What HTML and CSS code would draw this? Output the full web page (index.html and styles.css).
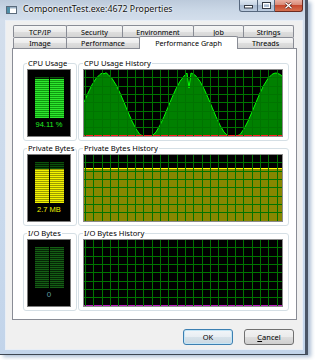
FILE: index.html
```html
<!DOCTYPE html>
<html>
<head>
<meta charset="utf-8">
<link rel="stylesheet" href="styles.css">
</head>
<body>
<div class="window">
  <div class="titlebar">
    <svg class="appicon" width="11" height="8" viewBox="0 0 11 8">
      <rect x="0.5" y="0.5" width="10" height="7" fill="#ffffff" stroke="#5b6b7c"/>
      <rect x="1" y="1" width="3" height="6" fill="#4f8fa8"/>
      <rect x="4" y="1" width="6" height="1.5" fill="#9fb3c6"/>
    </svg>
    <span class="title">ComponentTest.exe:4672 Properties</span>
    <div class="caption-buttons">
      <div class="cbtn min"><svg width="9" height="4" viewBox="0 0 9 4"><rect x="0.5" y="0.5" width="8" height="2.5" fill="#ffffff" stroke="#333a44"/></svg></div>
      <div class="cbtn max"><svg width="9" height="7" viewBox="0 0 9 7"><rect x="1" y="1" width="7" height="5" fill="none" stroke="#333a44" stroke-width="2"/><rect x="1.5" y="1.5" width="6" height="4" fill="none" stroke="#ffffff" stroke-width="1"/></svg></div>
      <div class="cbtn close"><svg width="9" height="7" viewBox="0 0 9 7"><path d="M1.5 0.8 L7.5 6.2 M7.5 0.8 L1.5 6.2" stroke="#5a1a10" stroke-width="2.6"/><path d="M1.5 0.8 L7.5 6.2 M7.5 0.8 L1.5 6.2" stroke="#ffffff" stroke-width="1.3"/></svg></div>
    </div>
  </div>
  <div class="client">
    <div class="tabs">
      <div class="tabrow row1">
        <div class="tab">TCP/IP</div>
        <div class="tab">Security</div>
        <div class="tab">Environment</div>
        <div class="tab">Job</div>
        <div class="tab">Strings</div>
      </div>
      <div class="tabrow row2">
        <div class="tab">Image</div>
        <div class="tab">Performance</div>
        <div class="tab selected">Performance Graph</div>
        <div class="tab">Threads</div>
      </div>
    </div>
    <div class="panel">
      <div class="grouprow">
        <fieldset class="group meter-group">
          <legend>CPU Usage</legend>
          <div class="meter">
            <div class="bars">
              <div class="col green"><div class="lit" style="height:94.11%"></div></div>
              <div class="col green"><div class="lit" style="height:94.11%"></div></div>
            </div>
            <div class="mval cpu">94.11 %</div>
          </div>
        </fieldset>
        <fieldset class="group hist-group">
          <legend>CPU Usage History</legend>
          <div class="graph">
            <svg width="198" height="66" viewBox="0 0 198 66">
              <path fill="#008000" d="M0,66 L0,32.4 4,23.1 8,14.9 12,8.5 16,4.4 18,3.2 20,3.8 22,2.8 24,4.4 28,8.5 32,14.9 36,23.1 40,32.4 44,42 48,51.1 52,58.9 56,64.7 60,66 64,66 68,66 72,62.1 76,55.2 80,46.7 84,37.2 88,27.7 92,18.8 96,11.4 100,6.1 103,3 105,18 107,3 110,4.5 112,6.1 116,11.4 120,18.8 124,27.7 128,37.2 132,46.7 136,55.2 140,62.1 144,66 148,66 152,66 156,64.7 160,58.9 164,51.1 168,42 172,32.4 176,23.1 180,14.9 184,8.5 188,4.4 190,3.4 192,3 194,3.6 196,4.4 198,6.1 L198,66 Z"/>
              <polyline fill="none" stroke="#00ff00" stroke-width="1" points="0,32.4 4,23.1 8,14.9 12,8.5 16,4.4 18,3.2 20,3.8 22,2.8 24,4.4 28,8.5 32,14.9 36,23.1 40,32.4 44,42 48,51.1 52,58.9 56,64.7 60,66 64,66 68,66 72,62.1 76,55.2 80,46.7 84,37.2 88,27.7 92,18.8 96,11.4 100,6.1 103,3 105,18 107,3 110,4.5 112,6.1 116,11.4 120,18.8 124,27.7 128,37.2 132,46.7 136,55.2 140,62.1 144,66 148,66 152,66 156,64.7 160,58.9 164,51.1 168,42 172,32.4 176,23.1 180,14.9 184,8.5 188,4.4 190,3.4 192,3 194,3.6 196,4.4 198,6.1"/>
              <line x1="0" y1="65.5" x2="198" y2="65.5" stroke="#ff2020" stroke-width="1"/>
            </svg>
          </div>
        </fieldset>
      </div>
      <div class="grouprow">
        <fieldset class="group meter-group">
          <legend>Private Bytes</legend>
          <div class="meter">
            <div class="bars">
              <div class="col green"><div class="lit yellow" style="height:82%"></div></div>
              <div class="col green"><div class="lit yellow" style="height:82%"></div></div>
            </div>
            <div class="mval mem">2.7 MB</div>
          </div>
        </fieldset>
        <fieldset class="group hist-group">
          <legend>Private Bytes History</legend>
          <div class="graph">
            <svg width="198" height="66" viewBox="0 0 198 66">
              <rect x="0" y="13" width="198" height="53" fill="#878700"/>
              <line x1="0" y1="13.5" x2="198" y2="13.5" stroke="#ffff00" stroke-width="1"/>
            </svg>
          </div>
        </fieldset>
      </div>
      <div class="grouprow">
        <fieldset class="group meter-group">
          <legend>I/O Bytes</legend>
          <div class="meter">
            <div class="bars">
              <div class="col green io"></div>
              <div class="col green io"></div>
            </div>
            <div class="mval io">0</div>
          </div>
        </fieldset>
        <fieldset class="group hist-group">
          <legend>I/O Bytes History</legend>
          <div class="graph">
            <svg width="198" height="66" viewBox="0 0 198 66">
              <line x1="0" y1="65.5" x2="198" y2="65.5" stroke="#c020c0" stroke-width="1"/>
            </svg>
          </div>
        </fieldset>
      </div>
    </div>
    <div class="buttons">
      <button class="btn default">OK</button>
      <button class="btn"><u>C</u>ancel</button>
    </div>
  </div>
</div>
</body>
</html>
```

FILE: styles.css
```css
html, body {
  margin: 0;
  padding: 0;
}
body {
  width: 315px;
  height: 360px;
  overflow: hidden;
  background: #ffffff;
  font-family: "Noto Sans", "Open Sans", sans-serif;
  color: #000;
}

.window {
  width: 308px;
  height: 355px;
  box-sizing: border-box;
  padding: 0 2px 5px 5px;
  display: flex;
  flex-direction: column;
  background: linear-gradient(180deg, #bccadb 0px, #cad7e6 10px, #d3deec 20px, #c9d9ec 60%, #c2d4ea 100%);
  border-right: 3px solid #4a5566;
  border-bottom: 1px solid #3d4652;
  box-shadow: 3px 2px 4px rgba(70, 110, 160, 0.45);
}

.titlebar {
  height: 20px;
  display: flex;
  align-items: flex-start;
  flex-shrink: 0;
}
.appicon {
  margin: 6px 0 0 1px;
  flex-shrink: 0;
}
.title {
  margin-left: 6px;
  font-size: 8.8px;
  line-height: 18px;
  white-space: nowrap;
  color: #111;
  text-shadow: 0 0 3px #ffffff, 0 0 2px #ffffff;
}
.caption-buttons {
  margin-left: auto;
  display: flex;
  height: 12px;
}
.cbtn {
  height: 12px;
  box-sizing: border-box;
  border: 1px solid #56677d;
  border-top: none;
  display: flex;
  align-items: center;
  justify-content: center;
  background: linear-gradient(180deg, #dfe8f2 0%, #c5d3e3 45%, #a9bbd1 50%, #bccce0 100%);
}
.cbtn.min {
  width: 19px;
  border-radius: 0 0 0 3px;
  align-items: flex-end;
  padding-bottom: 2px;
}
.cbtn.max {
  width: 17px;
  border-left: none;
}
.cbtn.close {
  width: 28px;
  border-left: none;
  border-color: #6d2c20;
  border-radius: 0 0 3px 0;
  background: linear-gradient(180deg, #eab0a2 0%, #d98a77 45%, #c6492f 50%, #d6704f 100%);
}

.client {
  flex: 1;
  box-sizing: border-box;
  background: #f0f0f0;
  border: 1px solid #e8eef6;
  padding: 4px 5px 4px 6px;
  display: flex;
  flex-direction: column;
}

.tabs {
  display: flex;
  flex-direction: column;
  padding-left: 1px;
}
.tabrow {
  display: grid;
}
.row1 {
  grid-template-columns: 53px 56px 71px 50px 50px;
  grid-template-rows: 12px;
}
.row2 {
  grid-template-columns: 53px 73px 98px 56px;
  grid-template-rows: 11px;
}
.tab {
  box-sizing: border-box;
  margin-right: -1px;
  border: 1px solid #898c95;
  border-bottom: none;
  border-radius: 2px 2px 0 0;
  background: linear-gradient(180deg, #f6f6f6 0%, #ececec 50%, #dedede 55%, #d4d4d4 100%);
  font-size: 7.2px;
  line-height: 10px;
  display: flex;
  align-items: center;
  justify-content: center;
  white-space: nowrap;
}
.tab.selected {
  position: relative;
  z-index: 1;
  height: 13px;
  margin-top: -1px;
  background: #ffffff;
}

.panel {
  height: 272px;
  box-sizing: border-box;
  border: 1px solid #898c95;
  background: #ffffff;
  padding: 9px 7px 0 10px;
  display: flex;
  flex-direction: column;
  gap: 2px;
}
.grouprow {
  display: flex;
  gap: 1px;
}
.group {
  margin: 0;
  min-inline-size: 0;
  box-sizing: border-box;
  border: 1px solid #d5dfe5;
  border-radius: 3px;
}
.group legend {
  padding: 0 1px;
  height: 10px;
  font-size: 7.6px;
  line-height: 10px;
  color: #000;
  white-space: nowrap;
}
.meter-group {
  width: 54px;
  padding: 1px 5px 3px 3px;
}
.hist-group {
  width: 211px;
  padding: 1px 5px 3px 4px;
}

.meter {
  width: 44px;
  height: 68px;
  box-sizing: border-box;
  border: 1px solid #7d7d7d;
  background: #000;
  padding-top: 7px;
  display: flex;
  flex-direction: column;
  align-items: center;
}
.bars {
  display: flex;
  gap: 1px;
  height: 41px;
}
.col {
  width: 14px;
  height: 100%;
  display: flex;
  flex-direction: column;
  justify-content: flex-end;
  background: repeating-linear-gradient(180deg, #0b520b 0px, #0b520b 1px, #031c03 1px, #031c03 2px);
}
.col.io {
  background: repeating-linear-gradient(180deg, #145e14 0px, #145e14 1px, #052405 1px, #052405 2px);
}
.lit {
  width: 100%;
  background: repeating-linear-gradient(0deg, #2ee82e 0px, #2ee82e 1px, #0f9a0f 1px, #0f9a0f 2px);
}
.lit.yellow {
  background: repeating-linear-gradient(0deg, #f2f200 0px, #f2f200 1px, #9a9a00 1px, #9a9a00 2px);
}
.mval {
  margin-top: 2px;
  font-family: "Liberation Sans", Arial, sans-serif;
  font-size: 7.5px;
  line-height: 9px;
  white-space: nowrap;
}
.mval.cpu { color: #22ee22; }
.mval.mem { color: #f0f000; }
.mval.io { color: #5f9ea0; font-size: 8px; }

.graph {
  position: relative;
  width: 200px;
  height: 68px;
  box-sizing: border-box;
  border: 1px solid #8a8a8a;
  background: #000;
}
.graph svg {
  display: block;
}
.graph::after {
  content: "";
  position: absolute;
  inset: 0;
  background-image:
    repeating-linear-gradient(90deg, transparent 0px, transparent 1px, #007400 1px, #007400 2px, transparent 2px, transparent 8.333px),
    repeating-linear-gradient(180deg, transparent 0px, transparent 7.333px, #007400 7.333px, #007400 8.333px);
}

.buttons {
  display: flex;
  justify-content: flex-end;
  gap: 11px;
  margin-top: 9px;
  margin-right: 3px;
}
.btn {
  width: 50px;
  height: 16px;
  box-sizing: border-box;
  margin: 0;
  padding: 0;
  border: 1px solid #707070;
  border-radius: 3px;
  background: linear-gradient(180deg, #f2f2f2 0%, #ebebeb 48%, #dddddd 52%, #cfcfcf 100%);
  font-family: "Noto Sans", "Open Sans", sans-serif;
  font-size: 7.5px;
  line-height: 12px;
  color: #000;
}
.btn.default {
  border-color: #3c7fb1;
  box-shadow: inset 0 0 0 1px #c4e5f6;
  background: linear-gradient(180deg, #f2f6f9 0%, #e8eef3 48%, #d7e2ea 52%, #cbd8e2 100%);
}
.btn u {
  text-decoration: underline;
}
```
